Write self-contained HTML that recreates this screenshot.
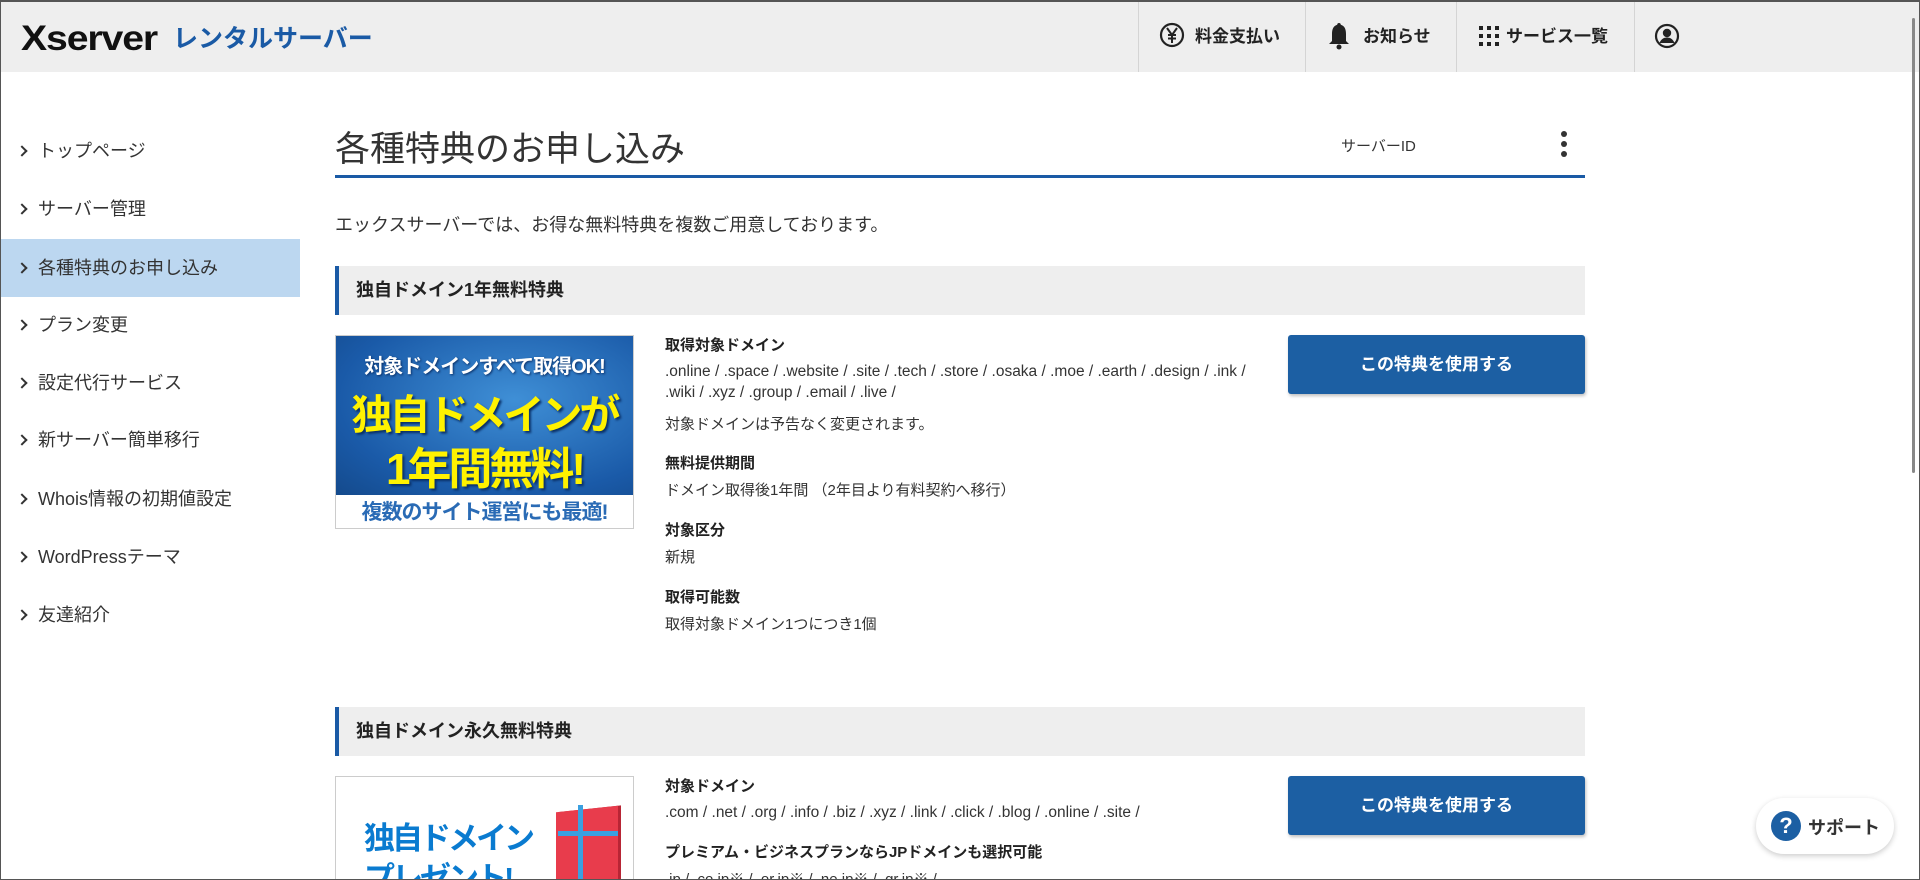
<!DOCTYPE html>
<html><head><meta charset="utf-8">
<style>
*{margin:0;padding:0;box-sizing:border-box}
html,body{width:1920px;height:880px;overflow:hidden;background:#fff}
body{font-family:"Liberation Sans","Noto Sans CJK JP",sans-serif;color:#333;position:relative}
.frame{position:absolute;left:0;top:0;width:1920px;height:880px;border:1px solid #555;border-top:2px solid #555;pointer-events:none;z-index:50}
.hdr{position:absolute;left:0;top:0;width:1920px;height:72px;background:#eee}
.logo1{position:absolute;left:21px;top:19px;font-size:35px;font-weight:bold;letter-spacing:-1px;color:#111;transform:scaleX(1.12);transform-origin:left}
.logo2{position:absolute;left:173px;top:19px;font-size:25px;font-weight:bold;color:#1a5aa5;letter-spacing:0}
.sep{position:absolute;top:0;width:1px;height:72px;background:#d4d4d4}
.hi{position:absolute;top:22px;font-size:17px;font-weight:bold;color:#222}
.side a{position:absolute;left:0;width:300px;height:58px;line-height:58px;padding-left:38px;font-size:18px;color:#333;text-decoration:none}
.side a::before{content:"";position:absolute;left:18px;top:25px;width:6px;height:6px;border-top:2px solid #333;border-right:2px solid #333;transform:rotate(45deg)}
.side a.on{background:#bcd7f0}
.title{position:absolute;left:335px;top:121px;font-size:35px;color:#333}
.line{position:absolute;left:335px;top:175px;width:1250px;height:3px;background:#1a5aa5}
.sid{position:absolute;left:1341px;top:135px;font-size:15px;color:#333}
.dot{position:absolute;left:1561px;width:6px;height:6px;border-radius:50%;background:#333}
.intro{position:absolute;left:335px;top:211px;font-size:18px}
.sh{position:absolute;left:335px;width:1250px;height:49px;background:#eee;border-left:4px solid #1a5aa5;padding-left:17px;line-height:49px;font-size:18px;font-weight:bold;color:#222}
.det{position:absolute;left:665px;font-size:15px;color:#333;line-height:21px}
.det .d{font-size:15.5px}
.det b{display:block;font-size:15px;color:#222}
.btn{position:absolute;left:1288px;width:297px;height:59px;background:#1c5fa3;border-radius:3px;box-shadow:1px 2px 3px rgba(0,0,0,.25);color:#fff;font-weight:bold;font-size:17px;text-align:center;line-height:59px}
.b1{position:absolute;left:335px;top:335px;width:299px;height:194px;border:1px solid #ccc;overflow:hidden}
.b1 .top{position:absolute;left:0;top:0;width:100%;height:159px;background:radial-gradient(ellipse at 60% 40%,#3f8fd6,#1a5aa8 70%,#144a8c)}
.b1 .bot{position:absolute;left:0;top:159px;width:100%;height:35px;background:#fff;color:#2a6bb5;font-weight:bold;font-size:21px;text-align:center;line-height:35px;letter-spacing:-1px}
.y{position:absolute;width:100%;text-align:center;color:#fff200;font-weight:bold;text-shadow:2px 2px 2px #0a2f66;letter-spacing:-3px;white-space:nowrap}
.b2{position:absolute;left:335px;top:776px;width:299px;height:120px;border:1px solid #ccc;background:#fff;overflow:hidden}
.b2t{position:absolute;left:28px;color:#0a7bd0;font-weight:bold;font-size:31px;letter-spacing:-3px}
</style></head><body>
<div class="hdr">
 <div class="logo1">Xserver</div>
 <div class="logo2">レンタルサーバー</div>
 <div class="sep" style="left:1138px"></div>
 <div class="sep" style="left:1305px"></div>
 <div class="sep" style="left:1456px"></div>
 <div class="sep" style="left:1634px"></div>
 <svg style="position:absolute;left:1159px;top:22px" width="26" height="26" viewBox="0 0 26 26"><circle cx="13" cy="13" r="11" fill="none" stroke="#222" stroke-width="2.2"/><path d="M8 6l5 7 5-7M13 13v8M9 13h8M9 16.5h8" fill="none" stroke="#222" stroke-width="2"/></svg>
 <div class="hi" style="left:1195px">料金支払い</div>
 <svg style="position:absolute;left:1328px;top:21px" width="22" height="30" viewBox="0 0 22 30"><path d="M11 2c1.2 0 1.8.8 1.8 1.8C17 5 18 9 18 13v7l3 3H1l3-3v-7c0-4 1-8 5.2-9.2C9.2 2.8 9.8 2 11 2z" fill="#222"/><circle cx="11" cy="26" r="2.5" fill="#222"/></svg>
 <div class="hi" style="left:1363px">お知らせ</div>
 <svg style="position:absolute;left:1479px;top:26px" width="20" height="20" viewBox="0 0 20 20" fill="#222"><rect x="0" y="0" width="4" height="4"/><rect x="8" y="0" width="4" height="4"/><rect x="16" y="0" width="4" height="4"/><rect x="0" y="8" width="4" height="4"/><rect x="8" y="8" width="4" height="4"/><rect x="16" y="8" width="4" height="4"/><rect x="0" y="16" width="4" height="4"/><rect x="8" y="16" width="4" height="4"/><rect x="16" y="16" width="4" height="4"/></svg>
 <div class="hi" style="left:1506px">サービス一覧</div>
 <svg style="position:absolute;left:1654px;top:23px" width="26" height="26" viewBox="0 0 26 26"><circle cx="13" cy="13" r="11" fill="none" stroke="#222" stroke-width="2.2"/><circle cx="13" cy="10" r="4.2" fill="#222"/><path d="M5.5 20c1.5-4 4.5-5.5 7.5-5.5s6 1.5 7.5 5.5" fill="#222"/></svg>
</div>
<div class="side">
 <a style="top:122px">トップページ</a>
 <a style="top:180px">サーバー管理</a>
 <a class="on" style="top:239px">各種特典のお申し込み</a>
 <a style="top:296px">プラン変更</a>
 <a style="top:354px">設定代行サービス</a>
 <a style="top:411px">新サーバー簡単移行</a>
 <a style="top:470px">Whois情報の初期値設定</a>
 <a style="top:528px">WordPressテーマ</a>
 <a style="top:586px">友達紹介</a>
</div>
<div class="title">各種特典のお申し込み</div>
<div class="sid">サーバーID</div>
<div class="dot" style="top:131px"></div><div class="dot" style="top:141px"></div><div class="dot" style="top:151px"></div>
<div class="line"></div>
<div class="intro">エックスサーバーでは、お得な無料特典を複数ご用意しております。</div>

<div class="sh" style="top:266px">独自ドメイン1年無料特典</div>
<div class="b1">
 <div class="top">
  <div class="y" style="top:14px;font-size:20px;color:#fff;text-shadow:1px 1px 2px #0a2f66;letter-spacing:-1px">対象ドメインすべて取得OK!</div>
  <div class="y" style="top:45px;font-size:41px">独自ドメインが</div>
  <div class="y" style="top:97px;font-size:44px">1年間無料!</div>
 </div>
 <div class="bot">複数のサイト運営にも最適!</div>
</div>
<div class="det" style="top:335px">
 <b>取得対象ドメイン</b>
 <div class="d" style="margin-top:5px">.online / .space / .website / .site / .tech / .store / .osaka / .moe / .earth / .design / .ink /<br>.wiki / .xyz / .group / .email / .live /</div>
 <div style="margin-top:11px">対象ドメインは予告なく変更されます。</div>
 <b style="margin-top:18px">無料提供期間</b>
 <div style="margin-top:6px">ドメイン取得後1年間 （2年目より有料契約へ移行）</div>
 <b style="margin-top:19px">対象区分</b>
 <div style="margin-top:6px">新規</div>
 <b style="margin-top:19px">取得可能数</b>
 <div style="margin-top:6px">取得対象ドメイン1つにつき1個</div>
</div>
<div class="btn" style="top:335px">この特典を使用する</div>

<div class="sh" style="top:707px">独自ドメイン永久無料特典</div>
<div class="b2">
 <div class="b2t" style="top:36px">独自ドメイン</div>
 <div class="b2t" style="top:76px">プレゼント!</div>
 <div style="position:absolute;left:220px;top:32px;width:62px;height:100px;background:#e83c4c;transform:skewY(-6deg);box-shadow:3px 0 0 #b82535"></div>
 <div style="position:absolute;left:242px;top:28px;width:5px;height:100px;background:#3aa0e0"></div>
 <div style="position:absolute;left:222px;top:54px;width:60px;height:5px;background:#3aa0e0"></div>
</div>
<div class="det" style="top:776px">
 <b>対象ドメイン</b>
 <div class="d" style="margin-top:5px">.com / .net / .org / .info / .biz / .xyz / .link / .click / .blog / .online / .site /</div>
 <b style="margin-top:19px">プレミアム・ビジネスプランならJPドメインも選択可能</b>
 <div style="margin-top:6px">.jp / .co.jp※ / .or.jp※ / .ne.jp※ / .gr.jp※ /</div>
</div>
<div class="btn" style="top:776px">この特典を使用する</div>

<div style="position:absolute;left:1756px;top:798px;width:138px;height:56px;border-radius:28px;background:#fff;box-shadow:0 2px 6px rgba(0,0,0,.2)">
 <div style="position:absolute;left:15px;top:13px;width:30px;height:30px;border-radius:50%;background:#1c5fa3;color:#fff;font-weight:bold;font-size:22px;text-align:center;line-height:30px">?</div>
 <div style="position:absolute;left:52px;top:16px;font-size:18px;font-weight:bold;color:#333">サポート</div>
</div>
<div style="position:absolute;left:1912px;top:18px;width:3px;height:455px;background:#888;border-radius:2px"></div>
<div class="frame"></div>
</body></html>
